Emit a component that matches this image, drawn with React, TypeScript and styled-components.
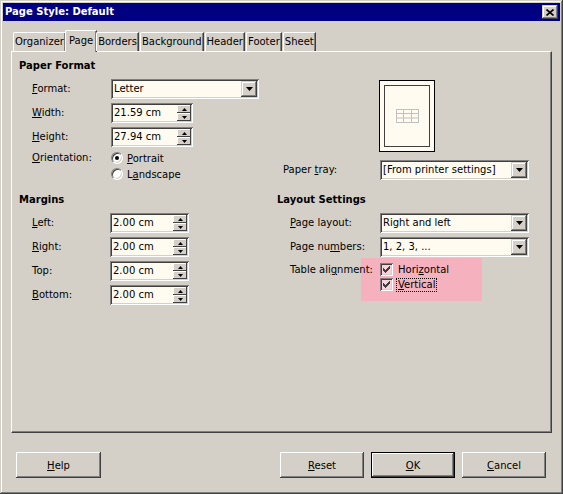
import React from 'react';
import styled, { createGlobalStyle, css } from 'styled-components';

const FACE = '#d4d0c8';
const FIELD = '#fffbf0';

const Global = createGlobalStyle`
  html, body { margin: 0; padding: 0; background: ${FACE}; }
  body { font-family: "DejaVu Sans", "Liberation Sans", sans-serif; font-size: 10px; color: #000; }
  * { box-sizing: border-box; }
`;

const raised = css`
  box-shadow: inset -1px -1px #404040, inset 1px 1px #ffffff, inset -2px -2px #808080, inset 2px 2px ${FACE};
`;
const raisedThin = css`
  box-shadow: inset -1px -1px #404040, inset 1px 1px ${FACE}, inset -2px -2px #808080, inset 2px 2px #ffffff;
`;
const sunken = css`
  box-shadow: inset 1px 1px #808080, inset -1px -1px #ffffff, inset 2px 2px #404040, inset -2px -2px ${FACE};
`;

const Window = styled.div`
  width: 563px;
  height: 494px;
  background: ${FACE};
  padding: 3px;
  display: flex;
  flex-direction: column;
  box-shadow: inset -1px -1px #404040, inset 1px 1px ${FACE}, inset -2px -2px #808080, inset 2px 2px #ffffff;
`;

const TitleBar = styled.div`
  height: 18px;
  background: #000080;
  color: #fff;
  display: flex;
  align-items: center;
  justify-content: space-between;
  padding: 0 2px 0 2px;
  font-weight: bold;
`;

const TitleText = styled.span`
  line-height: 18px;
  white-space: nowrap;
`;

const CloseButton = styled.span`
  width: 16px;
  height: 14px;
  background: ${FACE};
  ${raisedThin};
  display: flex;
  align-items: center;
  justify-content: center;
`;

const TabStrip = styled.div`
  margin-top: 9px;
  height: 21px;
  display: flex;
  align-items: flex-end;
  padding-left: 10px;
  position: relative;
  z-index: 1;
`;

const Tab = styled.div<{ $active?: boolean }>`
  height: ${p => (p.$active ? 22 : 19)}px;
  margin: ${p => (p.$active ? '0 -1px -1px -2px' : '0 1px 0 0')};
  padding: ${p => (p.$active ? '0 3px' : '0 1px')};
  background: ${FACE};
  border-top: 1px solid #fff;
  border-left: 1px solid #fff;
  border-right: 1px solid #404040;
  border-top-left-radius: 2px;
  box-shadow: inset -1px 0 #808080;
  display: flex;
  align-items: ${p => (p.$active ? 'flex-start' : 'center')};
  padding-top: ${p => (p.$active ? '3px' : '0')};
  white-space: nowrap;
  line-height: 14px;
`;

const Panel = styled.div`
  margin: 0 8px 0 8px;
  height: 382px;
  border-top: 1px solid #fff;
  border-left: 1px solid #fff;
  border-right: 1px solid #404040;
  border-bottom: 1px solid #404040;
  box-shadow: inset -1px -1px #808080;
  padding-left: 7px;
  display: grid;
  grid-template-columns: 258px 1fr;
  align-items: start;
`;

const Column = styled.div`
  display: flex;
  flex-direction: column;
`;

const SectionTitle = styled.div<{ $top: number }>`
  margin-top: ${p => p.$top}px;
  height: 14px;
  line-height: 14px;
  font-weight: bold;
  white-space: nowrap;
`;

const Rows = styled.div<{ $top: number }>`
  margin-top: ${p => p.$top}px;
  display: flex;
  flex-direction: column;
  gap: 4px;
`;

const Row = styled.div`
  display: flex;
  align-items: center;
  height: 20px;
`;

const TopRow = styled.div<{ $top: number }>`
  margin-top: ${p => p.$top}px;
  display: flex;
  align-items: flex-start;
  position: relative;
`;

const Label = styled.span<{ $w: number; $indent: number; $line?: number }>`
  width: ${p => p.$w}px;
  padding-left: ${p => p.$indent}px;
  flex: none;
  white-space: nowrap;
  line-height: ${p => p.$line ?? 14}px;
  position: relative;
  z-index: 1;
`;

const U = styled.span`
  text-decoration: underline;
  text-underline-offset: 1px;
`;

const Field = styled.div<{ $w: number }>`
  width: ${p => p.$w}px;
  height: 20px;
  background: ${FIELD};
  ${sunken};
  padding: 2px;
  display: flex;
  align-items: stretch;
`;

const FieldText = styled.span`
  flex: 1;
  padding-left: 1px;
  line-height: 16px;
  white-space: nowrap;
  overflow: hidden;
`;

const DropButton = styled.span`
  width: 16px;
  height: 16px;
  background: ${FACE};
  ${raisedThin};
  display: flex;
  align-items: center;
  justify-content: center;
`;

const SpinColumn = styled.span`
  width: 14px;
  display: flex;
  flex-direction: column;
`;

const SpinButton = styled.span`
  height: 8px;
  background: ${FACE};
  box-shadow: inset -1px -1px #404040, inset 1px 1px #ffffff;
  display: flex;
  align-items: center;
  justify-content: center;
`;

const RadioList = styled.div`
  display: flex;
  flex-direction: column;
  gap: 2px;
`;

const RadioItem = styled.div`
  display: flex;
  align-items: center;
  height: 14px;
  gap: 4px;
  white-space: nowrap;
`;

const RadioCircle = styled.span<{ $checked?: boolean }>`
  width: 12px;
  height: 12px;
  border-radius: 50%;
  background: #fff;
  border: 1px solid;
  border-color: #808080 #ffffff #ffffff #808080;
  box-shadow: inset 1px 1px #404040, inset -1px -1px ${FACE};
  display: flex;
  align-items: center;
  justify-content: center;
  &::after {
    content: '';
    width: 4px;
    height: 4px;
    border-radius: 50%;
    background: ${p => (p.$checked ? '#000' : 'transparent')};
  }
`;

const PreviewFrame = styled.div`
  margin: 28px 0 0 102px;
  width: 56px;
  height: 72px;
  border: 1px solid #000;
  background: ${FIELD};
  padding: 4px;
`;

const PreviewPage = styled.div`
  width: 100%;
  height: 100%;
  border: 1px solid #404040;
  background: ${FIELD};
  display: flex;
  align-items: center;
  justify-content: center;
  padding-bottom: 1px;
`;

const Highlight = styled.div`
  position: absolute;
  left: 84px;
  top: -4px;
  width: 121px;
  height: 43px;
  background: #f5b1bd;
  z-index: 0;
`;

const CheckList = styled.div`
  display: flex;
  flex-direction: column;
  position: relative;
  z-index: 1;
`;

const CheckItem = styled.div`
  display: flex;
  align-items: center;
  height: 15px;
  gap: 3px;
  white-space: nowrap;
`;

const CheckBox = styled.span`
  width: 13px;
  height: 13px;
  flex: none;
  background: #f9d3da;
  ${sunken};
  display: flex;
  align-items: center;
  justify-content: center;
`;

const CheckText = styled.span<{ $focus?: boolean }>`
  padding: 0 1px;
  line-height: 12px;
  border: 1px dotted ${p => (p.$focus ? '#000' : 'transparent')};
`;

const ButtonRow = styled.div`
  margin-top: 19px;
  padding: 0 14px 0 13px;
  display: flex;
  gap: 7px;
`;

const Spacer = styled.div`
  flex: 1;
`;

const Button = styled.button<{ $default?: boolean; $w?: number }>`
  width: ${p => p.$w ?? 84}px;
  height: 26px;
  padding: 0;
  margin: 0;
  background: ${FACE};
  font-family: "DejaVu Sans", "Liberation Sans", sans-serif;
  font-size: 10px;
  color: #000;
  border: ${p => (p.$default ? '1px solid #000' : 'none')};
  ${raised};
`;

const DownArrow = () => (
  <svg width="7" height="4" viewBox="0 0 7 4">
    <path d="M0 0h7L3.5 4z" fill="#000" />
  </svg>
);

const SpinArrow = ({ up }: { up?: boolean }) => (
  <svg width="5" height="3" viewBox="0 0 5 3">
    <path d={up ? 'M2.5 0L5 3H0z' : 'M0 0h5L2.5 3z'} fill="#000" />
  </svg>
);

const CloseIcon = () => (
  <svg width="8" height="7" viewBox="0 0 8 7">
    <path d="M0.5 0.5L7.5 6.5M7.5 0.5L0.5 6.5" stroke="#000" strokeWidth="1.6" />
  </svg>
);

const CheckMark = () => (
  <svg width="7" height="7" viewBox="0 0 7 7" shapeRendering="crispEdges">
    <g fill="#404040">
      <rect x="6" y="0" width="1" height="1" />
      <rect x="5" y="1" width="2" height="1" />
      <rect x="0" y="2" width="1" height="1" />
      <rect x="4" y="2" width="3" height="1" />
      <rect x="0" y="3" width="2" height="1" />
      <rect x="3" y="3" width="3" height="1" />
      <rect x="0" y="4" width="5" height="1" />
      <rect x="1" y="5" width="3" height="1" />
      <rect x="2" y="6" width="1" height="1" />
    </g>
  </svg>
);

const TableIcon = () => (
  <svg width="23" height="14" viewBox="0 0 23 14">
    <g stroke="#c0c0c0" strokeWidth="1" fill="none">
      <rect x="0.5" y="0.5" width="22" height="13" />
      <path d="M7.5 0.5v13M15.5 0.5v13M0.5 4.5h22M0.5 9h22" />
    </g>
  </svg>
);

const Dropdown = ({ w, value }: { w: number; value: string }) => (
  <Field $w={w}>
    <FieldText>{value}</FieldText>
    <DropButton>
      <DownArrow />
    </DropButton>
  </Field>
);

const Spin = ({ w, value }: { w: number; value: string }) => (
  <Field $w={w}>
    <FieldText>{value}</FieldText>
    <SpinColumn>
      <SpinButton>
        <SpinArrow up />
      </SpinButton>
      <SpinButton>
        <SpinArrow />
      </SpinButton>
    </SpinColumn>
  </Field>
);

const tabs = ['Organizer', 'Page', 'Borders', 'Background', 'Header', 'Footer', 'Sheet'];

export default function App() {
  return (
    <>
      <Global />
      <Window>
        <TitleBar>
          <TitleText>Page Style: Default</TitleText>
          <CloseButton>
            <CloseIcon />
          </CloseButton>
        </TitleBar>

        <TabStrip>
          {tabs.map(t => (
            <Tab key={t} $active={t === 'Page'}>
              {t}
            </Tab>
          ))}
        </TabStrip>

        <Panel>
          <Column>
            <SectionTitle $top={7}>Paper Format</SectionTitle>
            <Rows $top={6}>
              <Row>
                <Label $w={92} $indent={13}>
                  <U>F</U>ormat:
                </Label>
                <Dropdown w={148} value="Letter" />
              </Row>
              <Row>
                <Label $w={92} $indent={13}>
                  <U>W</U>idth:
                </Label>
                <Spin w={82} value="21.59 cm" />
              </Row>
              <Row>
                <Label $w={92} $indent={13}>
                  <U>H</U>eight:
                </Label>
                <Spin w={82} value="27.94 cm" />
              </Row>
            </Rows>
            <TopRow $top={4}>
              <Label $w={92} $indent={13}>
                <U>O</U>rientation:
              </Label>
              <RadioList>
                <RadioItem>
                  <RadioCircle $checked />
                  <span>
                    <U>P</U>ortrait
                  </span>
                </RadioItem>
                <RadioItem>
                  <RadioCircle />
                  <span>
                    L<U>a</U>ndscape
                  </span>
                </RadioItem>
              </RadioList>
            </TopRow>

            <SectionTitle $top={12}>Margins</SectionTitle>
            <Rows $top={6}>
              <Row>
                <Label $w={91} $indent={13}>
                  <U>L</U>eft:
                </Label>
                <Spin w={79} value="2.00 cm" />
              </Row>
              <Row>
                <Label $w={91} $indent={13}>
                  <U>R</U>ight:
                </Label>
                <Spin w={79} value="2.00 cm" />
              </Row>
              <Row>
                <Label $w={91} $indent={13}>
                  Top:
                </Label>
                <Spin w={79} value="2.00 cm" />
              </Row>
              <Row>
                <Label $w={91} $indent={13}>
                  <U>B</U>ottom:
                </Label>
                <Spin w={79} value="2.00 cm" />
              </Row>
            </Rows>
          </Column>

          <Column>
            <PreviewFrame>
              <PreviewPage>
                <TableIcon />
              </PreviewPage>
            </PreviewFrame>
            <Rows $top={8}>
              <Row>
                <Label $w={103} $indent={6}>
                  Paper <U>t</U>ray:
                </Label>
                <Dropdown w={149} value="[From printer settings]" />
              </Row>
            </Rows>

            <SectionTitle $top={13}>Layout Settings</SectionTitle>
            <Rows $top={6}>
              <Row>
                <Label $w={103} $indent={13}>
                  <U>P</U>age layout:
                </Label>
                <Dropdown w={149} value="Right and left" />
              </Row>
              <Row>
                <Label $w={103} $indent={13}>
                  Page nu<U>m</U>bers:
                </Label>
                <Dropdown w={149} value="1, 2, 3, ..." />
              </Row>
            </Rows>
            <TopRow $top={5}>
              <Highlight />
              <Label $w={103} $indent={13} $line={15}>
                Table ali<U>g</U>nment:
              </Label>
              <CheckList>
                <CheckItem>
                  <CheckBox>
                    <CheckMark />
                  </CheckBox>
                  <CheckText>
                    Hori<U>z</U>ontal
                  </CheckText>
                </CheckItem>
                <CheckItem>
                  <CheckBox>
                    <CheckMark />
                  </CheckBox>
                  <CheckText $focus>
                    <U>V</U>ertical
                  </CheckText>
                </CheckItem>
              </CheckList>
            </TopRow>
          </Column>
        </Panel>

        <ButtonRow>
          <Button $w={85}>
            <U>H</U>elp
          </Button>
          <Spacer />
          <Button>
            <U>R</U>eset
          </Button>
          <Button $default>
            <U>O</U>K
          </Button>
          <Button>
            <U>C</U>ancel
          </Button>
        </ButtonRow>
      </Window>
    </>
  );
}
